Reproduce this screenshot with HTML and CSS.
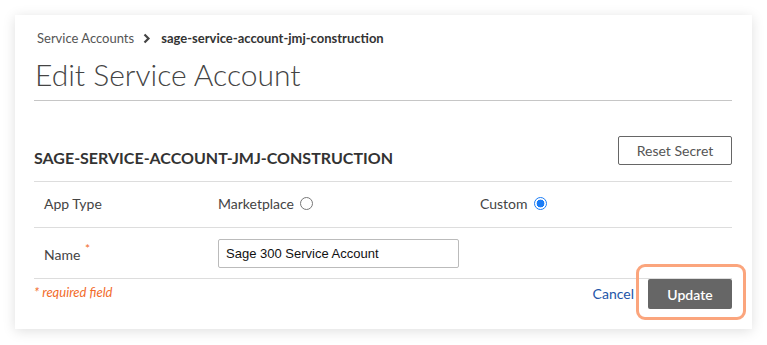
FILE: index.html
```html
<!DOCTYPE html>
<html lang="en">
<head>
    <meta charset="UTF-8">
    <meta name="viewport" content="width=device-width, initial-scale=1.0">
    <title>Edit Service Account</title>
    <link rel="stylesheet" href="styles.css">
</head>
<body>
    <div class="card">
        <div class="breadcrumb">
            <a class="crumb" href="#">Service Accounts</a>
            <svg class="chevron" width="8" height="11" viewBox="0 0 8 11">
                <path d="M1.5 1.5 L5.5 5.5 L1.5 9.5" fill="none" stroke="#444" stroke-width="2.2"/>
            </svg>
            <span class="crumb-current">sage-service-account-jmj-construction</span>
        </div>
        <h1 class="page-title">Edit Service Account</h1>

        <div class="section-head">
            <h2 class="section-title">SAGE-SERVICE-ACCOUNT-JMJ-CONSTRUCTION</h2>
            <button class="btn-outline">Reset Secret</button>
        </div>

        <div class="form-row">
            <div class="label">App Type</div>
            <label class="choice">Marketplace <input type="radio" name="apptype" class="radio"></label>
            <label class="choice">Custom <input type="radio" name="apptype" class="radio" checked></label>
        </div>

        <div class="form-row name-row">
            <div class="label">Name <span class="req">*</span></div>
            <input class="text-input" type="text" value="Sage 300 Service Account">
        </div>

        <div class="form-footer">
            <span class="req-note">* required field</span>
            <div class="actions">
                <a class="cancel" href="#">Cancel</a>
                <div class="update-wrap">
                    <button class="btn-primary">Update</button>
                    <span class="highlight"></span>
                </div>
            </div>
        </div>
    </div>
</body>
</html>
```

FILE: styles.css
```css
body {
    margin: 0;
    padding: 15px;
    background: #fff;
    font-family: Lato, 'Open Sans', sans-serif;
    color: #444;
}

.card {
    width: 737px;
    box-sizing: border-box;
    padding: 15px 20px 20px 19px;
    background: #fff;
    box-shadow: 0 2px 12px rgba(0,0,0,0.13);
}

.breadcrumb {
    display: flex;
    align-items: center;
    padding-left: 3px;
    font-size: 13px;
    line-height: 16px;
}

.crumb {
    color: #555;
    text-decoration: none;
}

.chevron {
    margin: 0 10px 0 9px;
}

.crumb-current {
    font-weight: bold;
    color: #333;
}

.page-title {
    margin: 10px 0 0;
    padding: 0 0 8px 1px;
    font-size: 30px;
    line-height: 36px;
    font-weight: 300;
    color: #444;
    border-bottom: 1px solid #c6c6c6;
}

.section-head {
    display: flex;
    justify-content: space-between;
    align-items: flex-end;
    padding: 35px 0 16px;
    border-bottom: 1px solid #ddd;
}

.section-title {
    margin: 0 0 -2px;
    font-size: 16px;
    line-height: 18px;
    font-weight: bold;
    color: #333;
}

.btn-outline {
    width: 114px;
    height: 29px;
    background: #fff;
    border: 1px solid #666;
    border-radius: 2px;
    font-family: Lato, sans-serif;
    font-size: 14px;
    color: #555;
}

.form-row {
    display: grid;
    grid-template-columns: 184px 262px 1fr;
    align-items: center;
    height: 45px;
    border-bottom: 1px solid #ddd;
    font-size: 14px;
    color: #444;
}

.name-row {
    height: 50px;
}

.label {
    padding-left: 10px;
    margin-top: -2px;
}

.name-row .label {
    margin-top: 2px;
}

.req {
    position: relative;
    top: -7px;
    margin-left: 1px;
    font-size: 12px;
    color: #f26b2b;
}

.choice {
    display: flex;
    align-items: center;
    margin-top: -2px;
}

.radio {
    appearance: none;
    margin: 0 0 0 6px;
    width: 13px;
    height: 13px;
    border: 1px solid #777;
    border-radius: 50%;
    background: #fff;
}

.radio:checked {
    border: 1.5px solid #1a7cf6;
    background: radial-gradient(circle, #1a7cf6 0 3.6px, #fff 4.2px);
}

.text-input {
    width: 241px;
    height: 29px;
    box-sizing: border-box;
    padding: 0 7px;
    border: 1px solid #bbb;
    border-radius: 2px;
    font-family: 'Liberation Sans', Arial, sans-serif;
    font-size: 13px;
    color: #111;
}

.form-footer {
    display: flex;
    justify-content: space-between;
    align-items: center;
}

.req-note {
    margin-top: -4px;
    font-size: 13px;
    font-style: italic;
    color: #f26b2b;
}

.actions {
    display: flex;
    align-items: center;
    gap: 14px;
}

.cancel {
    margin-top: -2px;
    font-size: 14px;
    color: #2255a8;
    text-decoration: none;
}

.update-wrap {
    position: relative;
}

.btn-primary {
    display: block;
    width: 84px;
    height: 30px;
    border: none;
    border-radius: 2px;
    background: #666;
    color: #fff;
    font-family: Lato, sans-serif;
    font-size: 14px;
    font-weight: 600;
}

.highlight {
    position: absolute;
    top: -15px;
    right: -14px;
    bottom: -11px;
    left: -12px;
    border: 3.5px solid #fba57d;
    border-radius: 9px;
}
```
